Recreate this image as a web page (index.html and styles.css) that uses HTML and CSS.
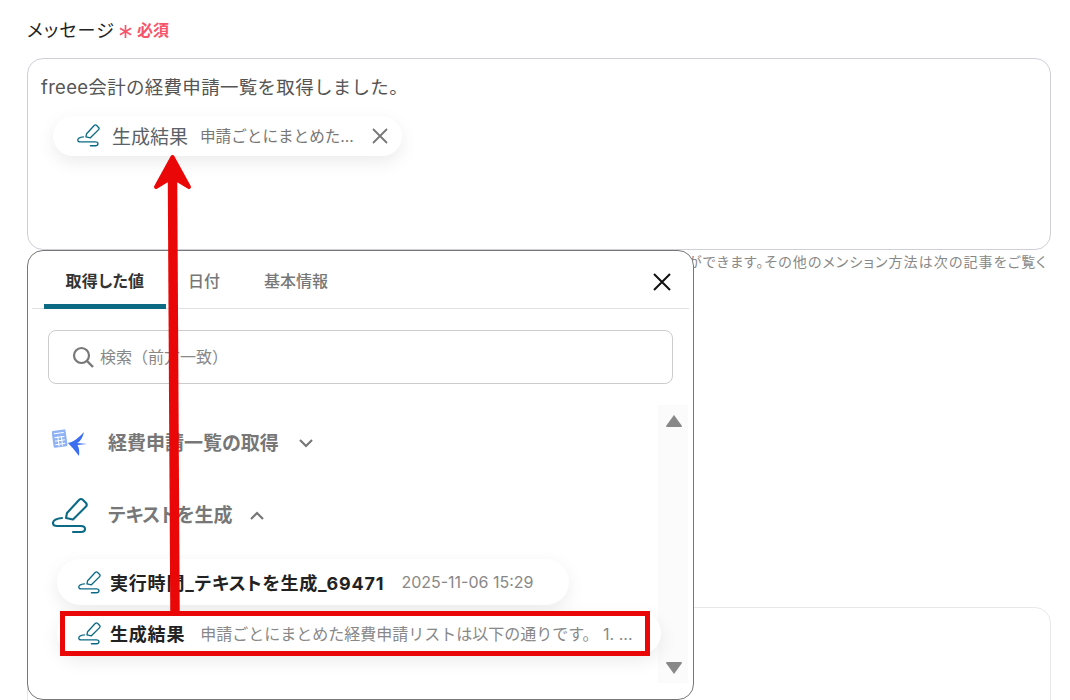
FILE: index.html
```html
<!DOCTYPE html>
<html lang="ja">
<head>
<meta charset="utf-8">
<title>メッセージ</title>
<link rel="stylesheet" href="styles.css">
</head>
<body>
<svg class="defs" width="0" height="0">
  <symbol id="pen" viewBox="0 0 36 38">
    <path d="M14 22 L15 17 L27 4 Q29 2 31 4 L34 7 Q35.500 9 34 10.500 L21 23.500 Z" fill="none" stroke="#0c6a85" stroke-width="2.100" stroke-linejoin="round"/>
    <path d="M10 22 Q1 23 1 27 Q1 30 5 30 L29 30 Q33 30 33 33 Q33 36 29 36 L21 36" fill="none" stroke="#0c6a85" stroke-width="2.100" stroke-linecap="round"/>
  </symbol>
</svg>
<main class="form">
  <div class="label"><span>メッセージ</span><span class="req"><svg class="star" viewBox="0 0 14 14"><path d="M7 0 V14 M1 3.500 L13 10.500 M13 3.500 L1 10.500" stroke="#f5546a" stroke-width="1.800" fill="none"/></svg>必須</span></div>
  <div class="editor">
    <p class="editor-text">freee会計の経費申請一覧を取得しました。</p>
    <div class="pill">
      <svg class="pen-s"><use href="#pen"/></svg>
      <span class="pill-name">生成結果</span>
      <span class="pill-val">申請ごとにまとめた...</span>
      <svg class="pill-x" viewBox="0 0 16 16"><path d="M1 1 L15 15 M15 1 L1 15" stroke="#777" stroke-width="1.800" fill="none"/></svg>
    </div>
  </div>
  <p class="help">「取得した値」のアイコンからアウトプットを選択して本文に挿入することができます。その他のメンション方法は次の記事をご覧く</p>
  <div class="lower"></div>
</main>

<section class="popup">
  <div class="tabs">
    <div class="tab active">取得した値</div>
    <div class="tab">日付</div>
    <div class="tab">基本情報</div>
    <svg class="close" viewBox="0 0 20 20"><path d="M2 2 L18 18 M18 2 L2 18" stroke="#111" stroke-width="2" fill="none"/></svg>
  </div>
  <div class="search">
    <svg class="search-i" viewBox="0 0 22 22"><circle cx="9.500" cy="9.500" r="7.500" fill="none" stroke="#777" stroke-width="2.200"/><path d="M15 15 L21 21" stroke="#777" stroke-width="2.400"/></svg>
    <span class="search-text">検索（前方一致）</span>
  </div>
  <div class="list">
    <div class="scroll">
      <svg viewBox="0 0 18 14"><path d="M9 1 L17 12 Q17 13 16 13 L2 13 Q1 13 1 12 Z" fill="#888"/></svg>
      <svg viewBox="0 0 18 14"><path d="M9 13 L17 2 Q17 1 16 1 L2 1 Q1 1 1 2 Z" fill="#888"/></svg>
    </div>
    <div class="group g1">
      <svg class="app" viewBox="0 0 36 30">
        <g transform="rotate(-8 8 10)">
          <rect x="0.500" y="2" width="14" height="17" rx="1.500" fill="#8fb2f5"/>
          <path d="M2.500 5 H12.500 M2.500 9 H12.500 M2.500 12.500 H12.500 M2.500 16 H12.500 M6 8 V18 M9.500 8 V18" stroke="#fff" stroke-width="1"/>
        </g>
        <path d="M16 15 Q23 14 32 4 Q30 13 25 15 L35 16 L25.500 17 Q28 22 27 28 Q22 21 16 15 Z" fill="#3b6ff0"/>
      </svg>
      <span class="g-name">経費申請一覧の取得</span>
      <svg class="chev" viewBox="0 0 14 9"><path d="M1 1 L7 7 L13 1" fill="none" stroke="#777" stroke-width="2.200"/></svg>
    </div>
    <div class="group g2">
      <svg class="app pen-l"><use href="#pen"/></svg>
      <span class="g-name">テキストを生成</span>
      <svg class="chev" viewBox="0 0 14 9"><path d="M1 8 L7 2 L13 8" fill="none" stroke="#777" stroke-width="2.200"/></svg>
    </div>
    <div class="chip first">
      <svg class="pen-s"><use href="#pen"/></svg>
      <span class="chip-name">実行時間_テキストを生成_69471</span>
      <span class="chip-val">2025-11-06 15:29</span>
    </div>
    <div class="chip second">
      <svg class="pen-s"><use href="#pen"/></svg>
      <span class="chip-name">生成結果</span>
      <span class="chip-val">申請ごとにまとめた経費申請リストは以下の通りです。 1. ...</span>
    </div>
  </div>
</section>

<div class="redbox"></div>
<svg class="arrow" width="60" height="480" viewBox="0 0 60 480">
  <path d="M24 460 L21.500 25" stroke="#ea0707" stroke-width="9.500" fill="none"/>
  <path d="M21.500 3 L38 33 L21.500 23 L5 33 Z" fill="#ea0707" stroke="#ea0707" stroke-width="4" stroke-linejoin="round"/>
</svg>
</body>
</html>
```
FILE: styles.css
```css
* { box-sizing: border-box; }
html, body { margin: 0; height: 700px; overflow: hidden; background: #fff; }
body {
  font-family: Inter, "Noto Sans CJK JP", "Noto Sans", sans-serif;
  color: #222;
  position: relative;
}
.defs { position: absolute; }
.form { padding: 17px 19px 0 27px; display: flex; flex-direction: column; height: 700px; overflow: hidden; }
.label { display: flex; align-items: center; flex: none; height: 24px; font-size: 18px; letter-spacing: 1.2px; font-feature-settings: "palt"; color: #222; }
.req { display: flex; align-items: center; margin-left: 4px; font-size: 16px; font-weight: 700; letter-spacing: 0; color: #f5546a; }
.star { width: 13px; height: 13px; margin-right: 5px; position: relative; top: 2px; }
.editor {
  flex: none; margin-top: 17px; height: 192px; border: 1px solid #cfcfd8; border-radius: 16px;
  padding: 15px 13px 0;
}
.editor-text { margin: 0; font-size: 18.500px; letter-spacing: .3px; line-height: 26px; color: #555; }
.pill {
  display: inline-flex; align-items: center; height: 40px; margin: 16px 0 0 12px; padding: 0 14px 2px 24px;
  background: #fff; border-radius: 20px; box-shadow: 0 6px 18px rgba(0,0,0,.08);
}
.pen-s { width: 23px; height: 24px; flex: none; }
.pill-name { margin-left: 12px; font-size: 19px; color: #5a6268; }
.pill-val { margin-left: 12px; font-size: 15.600px; color: #777; }
.pill-x { width: 16px; height: 16px; margin: 2px 0 0 18px; }
.help {
  flex: none; margin: 3px 0 0; height: 18px; font-size: 14px; letter-spacing: 1.100px; line-height: 18px; color: #888;
  font-feature-settings: "palt";
  white-space: nowrap; display: flex; justify-content: flex-end; overflow: hidden; padding-right: 4px;
}
.lower { flex: none; margin-top: 336px; height: 200px; border: 1px solid #e8e8e8; border-radius: 16px; }

.popup {
  position: absolute; left: 27px; top: 250px; width: 667px; height: 450px;
  background: #fff; border: 1px solid #777; border-radius: 16px; overflow: hidden;
  display: flex; flex-direction: column;
}
.tabs {
  display: flex; align-items: stretch; flex: none; height: 58px; margin: 0 4px; padding-left: 12px;
  border-bottom: 1px solid #e2e2e2; position: relative;
}
.tab { display: flex; align-items: center; justify-content: center; padding: 1px 22px 0; font-size: 16px; font-weight: 500; color: #777; font-feature-settings: "palt"; }
.tab.active { width: 122px; padding: 4px 0 0; color: #333; font-weight: 700; letter-spacing: .3px; border-bottom: 5px solid #0c6a85; border-radius: 5px 5px 0 0; margin-bottom: -1px; }
.close { width: 20px; height: 20px; margin: 21px 17px 0 auto; align-self: flex-start; }
.search {
  display: flex; align-items: center; flex: none; gap: 6px; height: 54px; margin: 21px 20px 0; padding-left: 23px;
  border: 1px solid #ccc; border-radius: 8px; font-size: 16px; color: #888;
}
.search-text { position: relative; top: -1px; }
.search-i { width: 22px; height: 22px; }
.list { position: relative; flex: 1; min-height: 0; padding: 21px 0 0 24px; }
.scroll {
  position: absolute; right: 5px; top: 21px; width: 30px; height: 278px; background: #fbfbfb;
  display: flex; flex-direction: column; justify-content: space-between; align-items: center; padding: 9px 0 8px 2px;
}
.scroll svg { width: 18px; height: 14px; }
.group { display: flex; align-items: center; height: 72px; font-size: 19px; font-weight: 700; color: #777; font-feature-settings: "palt"; }
.g1 { margin-top: 2px; }
.app { width: 36px; height: 30px; flex: none; }
.pen-l { height: 38px; }
.g-name { margin: 0 0 3px 20px; }
.chev { width: 14px; height: 9px; margin-left: 20px; }
.g2 .chev { margin-left: 18px; }
.chip {
  display: flex; align-items: center; background: #fff; border-radius: 23px; padding: 0 35px 0 21px;
  box-shadow: 0 6px 18px rgba(0,0,0,.08); width: fit-content; margin-left: 5px; white-space: nowrap; position: relative;
}
.first { height: 46px; margin-top: 8px; }
.second { height: 44px; margin-top: 6px; padding-right: 28px; }
.chip-name { margin-left: 9px; font-size: 18px; letter-spacing: .8px; font-weight: 700; color: #222; font-feature-settings: "palt"; }
.chip-val { margin-left: 17px; font-size: 16px; color: #888; white-space: nowrap; }
.second .chip-val { margin-left: 15px; }
.redbox { position: absolute; left: 60px; top: 611px; width: 590px; height: 45px; border: 5px solid #ea0707; }
.arrow { position: absolute; left: 151px; top: 154px; }
```
